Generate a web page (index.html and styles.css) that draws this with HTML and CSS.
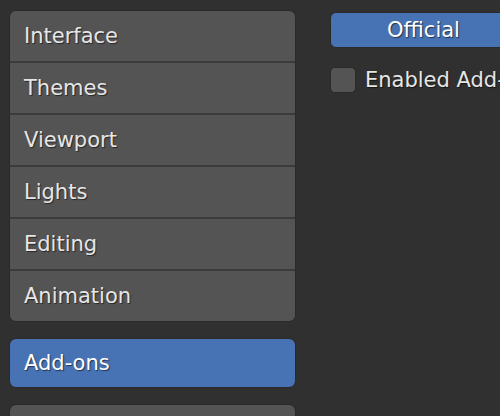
FILE: index.html
```html
<!DOCTYPE html>
<html>
<head>
<meta charset="utf-8">
<link rel="stylesheet" href="styles.css">
</head>
<body>
<div class="layout">
  <div class="sidebar">
    <div class="group">
      <div class="item">Interface</div>
      <div class="item">Themes</div>
      <div class="item">Viewport</div>
      <div class="item">Lights</div>
      <div class="item">Editing</div>
      <div class="item">Animation</div>
    </div>
    <div class="group single active">
      <div class="item">Add-ons</div>
    </div>
    <div class="group single">
      <div class="item"></div>
    </div>
  </div>
  <div class="main">
    <div class="tab-button">Official</div>
    <label class="check-row">
      <span class="checkbox"></span>
      <span class="check-label">Enabled Add-ons Only</span>
    </label>
  </div>
</div>
</body>
</html>
```

FILE: styles.css
```css
html, body {
  margin: 0;
  padding: 0;
  height: 100%;
  overflow: hidden;
}
body {
  background: #303030;
  font-family: "DejaVu Sans", sans-serif;
  font-size: 21px;
  color: #e6e6e6;
}
.layout {
  display: flex;
  height: 416px;
}
.sidebar {
  width: 287px;
  padding-left: 9px;
  padding-top: 10px;
  display: flex;
  flex-direction: column;
  gap: 16px;
  flex-shrink: 0;
}
.group {
  flex-shrink: 0;
  background: #3b3b3b;
  border: 1px solid #2a2a2a;
  border-radius: 7px;
  overflow: hidden;
  display: flex;
  flex-direction: column;
  gap: 2px;
}
.item {
  height: 50px;
  background: #545454;
  display: flex;
  align-items: center;
  padding-left: 14px;
  text-shadow: 1px 1px 1px rgba(0, 0, 0, 0.55);
  flex-shrink: 0;
}
.group.single {
  height: 48px;
}
.group.single .item {
  height: 48px;
}
.group.active .item {
  background: #4772b3;
  color: #ffffff;
}
.main {
  flex: 1;
  padding-left: 34px;
  padding-top: 12px;
  display: flex;
  flex-direction: column;
  gap: 19px;
  min-width: 0;
}
.tab-button {
  width: 185px;
  height: 34px;
  flex-shrink: 0;
  background: #4772b3;
  border: 1px solid #2a2a2a;
  border-radius: 6px;
  color: #ffffff;
  display: flex;
  align-items: center;
  justify-content: center;
  text-shadow: 1px 1px 1px rgba(0, 0, 0, 0.55);
}
.check-row {
  display: flex;
  align-items: center;
  gap: 9px;
  white-space: nowrap;
}
.checkbox {
  width: 24px;
  height: 24px;
  flex-shrink: 0;
  background: #545454;
  border: 1px solid #2a2a2a;
  border-radius: 5px;
}
.check-label {
  text-shadow: 1px 1px 1px rgba(0, 0, 0, 0.55);
}
```
